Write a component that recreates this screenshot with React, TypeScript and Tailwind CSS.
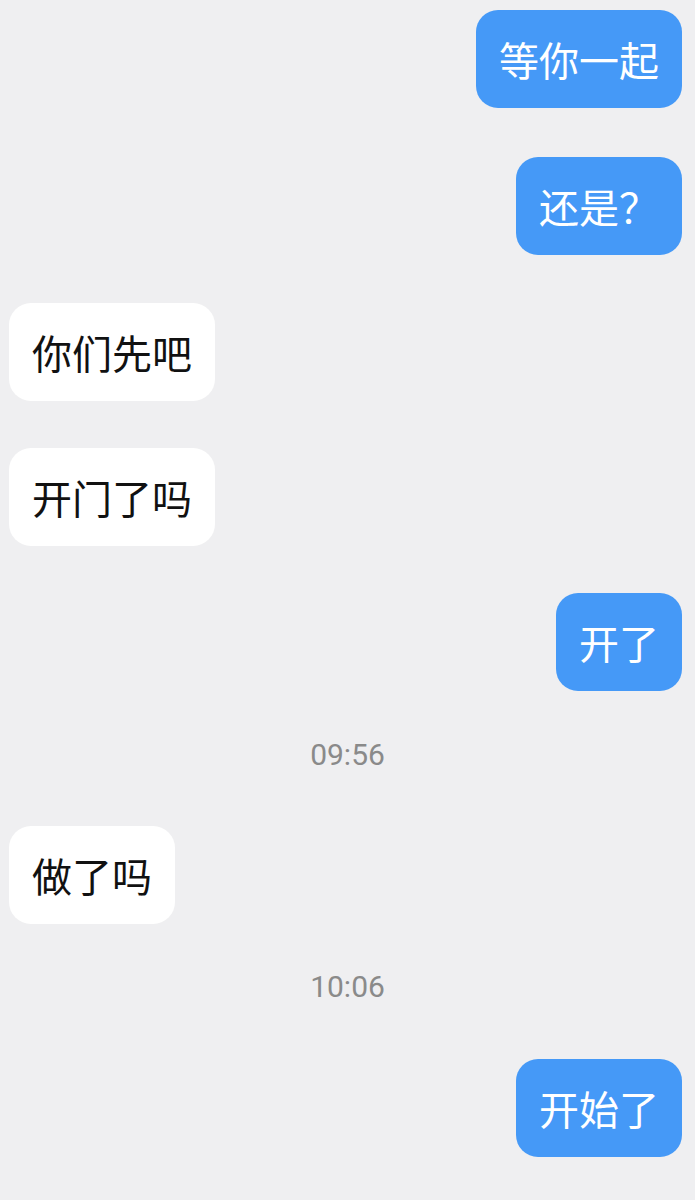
import React from 'react';

type Item =
  | { kind: 'me'; text: string; mt: string }
  | { kind: 'them'; text: string; mt: string }
  | { kind: 'time'; text: string; mt: string };

const items: Item[] = [
  { kind: 'me', text: '等你一起', mt: 'mt-[10px]' },
  { kind: 'me', text: '还是？', mt: 'mt-[49px]' },
  { kind: 'them', text: '你们先吧', mt: 'mt-[48px]' },
  { kind: 'them', text: '开门了吗', mt: 'mt-[47px]' },
  { kind: 'me', text: '开了', mt: 'mt-[47px]' },
  { kind: 'time', text: '09:56', mt: 'mt-[43px]' },
  { kind: 'them', text: '做了吗', mt: 'mt-[52px]' },
  { kind: 'time', text: '10:06', mt: 'mt-[42px]' },
  { kind: 'me', text: '开始了', mt: 'mt-[53px]' },
];

const Bubble: React.FC<{ mine: boolean; text: string }> = ({ mine, text }) => (
  <div
    className={
      mine
        ? 'bg-[#4599f7] text-white rounded-[22px] px-[23px] py-[22px] text-[40px] leading-[54px]'
        : 'bg-white text-[#111] rounded-[22px] px-[23px] py-[22px] text-[40px] leading-[54px]'
    }
  >
    {text}
  </div>
);

export default function App() {
  return (
    <div
      className="w-[695px] h-[1200px] bg-[#efeff1] flex flex-col overflow-hidden"
      style={{ fontFamily: '"Noto Sans CJK SC", "Noto Sans", sans-serif' }}
    >
      {items.map((it, i) => {
        if (it.kind === 'time') {
          return (
            <div
              key={i}
              className={`${it.mt} h-[40px] flex items-center justify-center text-[30px] text-[#8a8a8a] font-[Roboto,sans-serif]`}
            >
              {it.text}
            </div>
          );
        }
        return (
          <div
            key={i}
            className={`${it.mt} flex ${it.kind === 'me' ? 'justify-end pr-[13px]' : 'justify-start pl-[9px]'}`}
          >
            <Bubble mine={it.kind === 'me'} text={it.text} />
          </div>
        );
      })}
    </div>
  );
}
